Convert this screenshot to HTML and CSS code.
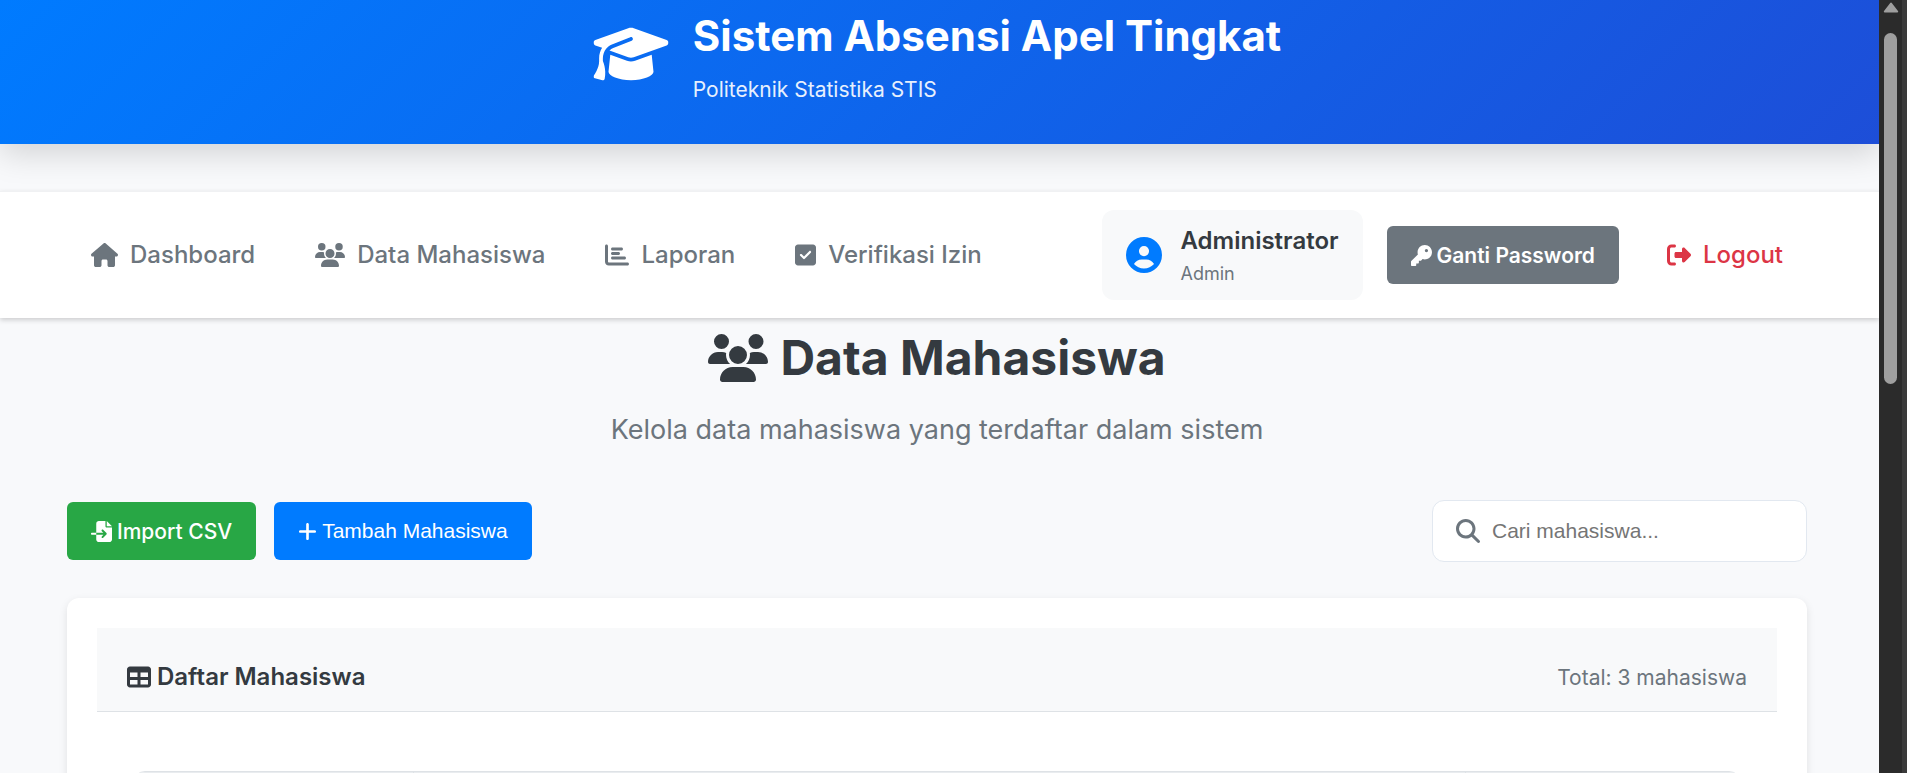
FILE: index.html
```html
<!DOCTYPE html>
<html lang="id">
<head>
<meta charset="utf-8">
<title>Data Mahasiswa</title>
<link rel="stylesheet" href="styles.css">
</head>
<body>
<svg class="sprite" aria-hidden="true">
  <symbol id="cap" viewBox="0 0 640 512"><path d="M320 32c-8.1 0-16.1 1.4-23.7 4.1L15.8 137.4C6.3 140.9 0 149.9 0 160s6.3 19.1 15.8 22.6l57.9 20.9C57.3 229.3 48 259.8 48 291.9v28.1c0 28.4-10.8 57.7-22.3 80.8c-6.5 13-13.9 25.8-22.5 37.6C0 442.7-.9 448.3 .9 453.4s6 8.9 11.2 10.2l64 16c4.2 1.1 8.7 .3 12.4-2s6.3-6.1 7.1-10.4c8.6-42.8 4.3-81.2-2.1-108.7C90.3 344.3 86 329.8 80 316.5V291.9c0-30.2 10.2-58.7 27.9-81.5c12.9-15.5 29.6-28 49.2-35.7l157-61.7c8.2-3.2 17.5 .8 20.7 9s-.8 17.5-9 20.7l-157 61.7c-12.4 4.9-23.3 12.4-32.2 21.6l159.6 57.6c7.6 2.7 15.6 4.1 23.7 4.1s16.1-1.4 23.7-4.1L624.2 182.6c9.5-3.4 15.8-12.5 15.8-22.6s-6.3-19.1-15.8-22.6L343.7 36.1C336.1 33.4 328.1 32 320 32zM128 408c0 35.3 86 72 192 72s192-36.7 192-72L496.7 262.6 354.5 314c-11.1 4-22.8 6-34.5 6s-23.5-2-34.5-6L143.3 262.6 128 408z"/></symbol>
  <symbol id="house" viewBox="0 0 576 512"><path d="M575.8 255.5c0 18-15 32.1-32 32.1h-32l.7 160.2c0 2.7-.2 5.4-.5 8.1V472c0 22.1-17.9 40-40 40H456c-1.1 0-2.2 0-3.3-.1c-1.4 .1-2.8 .1-4.2 .1H416 392c-22.1 0-40-17.9-40-40V448 384c0-17.7-14.3-32-32-32H256c-17.7 0-32 14.3-32 32v64 24c0 22.1-17.9 40-40 40H160 128.1c-1.5 0-3-.1-4.5-.2c-1.2 .1-2.4 .2-3.6 .2H104c-22.1 0-40-17.9-40-40V360c0-.9 0-1.9 .1-2.8V287.6H32c-18 0-32-14-32-32.1c0-9 3-17 10-24L266.4 8c7-7 15-8 22-8s15 2 21 7L564.8 231.5c8 7 12 15 11 24z"/></symbol>
  <symbol id="users" viewBox="0 0 640 512"><path d="M144 0a80 80 0 1 1 0 160A80 80 0 1 1 144 0zM512 0a80 80 0 1 1 0 160A80 80 0 1 1 512 0zM0 298.7C0 239.8 47.8 192 106.7 192h42.7c15.9 0 31 3.5 44.6 9.7c-1.3 7.2-1.9 14.7-1.9 22.3c0 38.2 16.8 72.5 43.3 96c-.2 0-.4 0-.7 0H21.3C9.6 320 0 310.4 0 298.7zM405.3 320c-.2 0-.4 0-.7 0c26.6-23.5 43.3-57.8 43.3-96c0-7.6-.7-15-1.9-22.3c13.6-6.3 28.7-9.7 44.6-9.7h42.7C592.2 192 640 239.8 640 298.7c0 11.8-9.6 21.3-21.3 21.3H405.3zM224 224a96 96 0 1 1 192 0 96 96 0 1 1 -192 0zM128 485.3C128 411.7 187.7 352 261.3 352H378.7C452.3 352 512 411.7 512 485.3c0 14.7-11.9 26.7-26.7 26.7H154.7c-14.7 0-26.7-11.9-26.7-26.7z"/></symbol>
  <symbol id="chart" viewBox="0 0 512 512"><path d="M32 32c17.7 0 32 14.3 32 32V400c0 8.8 7.2 16 16 16H480c17.7 0 32 14.3 32 32s-14.3 32-32 32H80c-44.2 0-80-35.8-80-80V64C0 46.3 14.3 32 32 32zm96 96c0-17.7 14.3-32 32-32l192 0c17.7 0 32 14.3 32 32s-14.3 32-32 32H160c-17.7 0-32-14.3-32-32zm32 64H288c17.7 0 32 14.3 32 32s-14.3 32-32 32H160c-17.7 0-32-14.3-32-32s14.3-32 32-32zm0 96H416c17.7 0 32 14.3 32 32s-14.3 32-32 32H160c-17.7 0-32-14.3-32-32s14.3-32 32-32z"/></symbol>
  <symbol id="check" viewBox="0 0 448 512"><path d="M64 32C28.7 32 0 60.7 0 96V416c0 35.3 28.7 64 64 64H384c35.3 0 64-28.7 64-64V96c0-35.3-28.7-64-64-64H64zM337 209L209 337c-9.4 9.4-24.6 9.4-33.9 0l-64-64c-9.4-9.4-9.4-24.6 0-33.9s24.6-9.4 33.9 0l47 47L303 175c9.4-9.4 24.6-9.4 33.9 0s9.4 24.6 0 33.9z"/></symbol>
  <symbol id="user" viewBox="0 0 512 512"><path d="M399 384.2C376.9 345.8 335.4 320 288 320H224c-47.4 0-88.9 25.8-111 64.2c35.2 39.2 86.2 63.8 143 63.8s107.8-24.7 143-63.8zM0 256a256 256 0 1 1 512 0A256 256 0 1 1 0 256zm256 16a72 72 0 1 0 0-144 72 72 0 1 0 0 144z"/></symbol>
  <symbol id="key" viewBox="0 0 512 512"><path d="M336 352c97.2 0 176-78.8 176-176S433.2 0 336 0S160 78.8 160 176c0 18.7 2.9 36.8 8.3 53.7L7 391c-4.5 4.5-7 10.6-7 17v80c0 13.3 10.7 24 24 24h80c13.3 0 24-10.7 24-24V448h40c13.3 0 24-10.7 24-24V384h40c6.4 0 12.5-2.5 17-7l33.3-33.3c16.9 5.4 35 8.3 53.7 8.3zM376 96a40 40 0 1 1 0 80 40 40 0 1 1 0-80z"/></symbol>
  <symbol id="exit" viewBox="0 0 512 512"><path d="M377.9 105.9L500.7 228.7c7.2 7.2 11.3 17.1 11.3 27.3s-4.1 20.1-11.3 27.3L377.9 406.1c-6.4 6.4-15 9.9-24 9.9c-18.7 0-33.9-15.2-33.9-33.9l0-62.1-128 0c-17.7 0-32-14.3-32-32l0-64c0-17.7 14.3-32 32-32l128 0 0-62.1c0-18.7 15.2-33.9 33.9-33.9c9 0 17.6 3.6 24 9.9zM160 96L96 96c-17.7 0-32 14.3-32 32l0 256c0 17.7 14.3 32 32 32l64 0c17.7 0 32 14.3 32 32s-14.3 32-32 32l-64 0c-53 0-96-43-96-96L0 128C0 75 43 32 96 32l64 0c17.7 0 32 14.3 32 32s-14.3 32-32 32z"/></symbol>
  <symbol id="import" viewBox="0 0 512 512"><path d="M128 64c0-35.3 28.7-64 64-64H352V128c0 17.7 14.3 32 32 32H512V448c0 35.3-28.7 64-64 64H192c-35.3 0-64-28.7-64-64V336H302.1l-39 39c-9.4 9.4-9.4 24.6 0 33.9s24.6 9.4 33.9 0l80-80c9.4-9.4 9.4-24.6 0-33.9l-80-80c-9.4-9.4-24.6-9.4-33.9 0s-9.4 24.6 0 33.9l39 39H128V64zm0 224v48H24c-13.3 0-24-10.7-24-24s10.7-24 24-24H128zM512 128H384V0L512 128z"/></symbol>
  <symbol id="plus" viewBox="0 0 448 512"><path d="M256 80c0-17.7-14.3-32-32-32s-32 14.3-32 32V224H48c-17.7 0-32 14.3-32 32s14.3 32 32 32H192V432c0 17.7 14.3 32 32 32s32-14.3 32-32V288H400c17.7 0 32-14.3 32-32s-14.3-32-32-32H256V80z"/></symbol>
  <symbol id="search" viewBox="0 0 512 512"><path d="M416 208c0 45.9-14.9 88.3-40 122.7L502.6 457.4c12.5 12.5 12.5 32.8 0 45.3s-32.8 12.5-45.3 0L330.7 376c-34.4 25.2-76.8 40-122.7 40C93.1 416 0 322.9 0 208S93.1 0 208 0S416 93.1 416 208zM208 352a144 144 0 1 0 0-288 144 144 0 1 0 0 288z"/></symbol>
  <symbol id="table" viewBox="0 0 512 512"><path d="M64 256V160H224v96H64zm0 64H224v96H64V320zm224 96V320H448v96H288zM448 256H288V160H448v96zM64 32C28.7 32 0 60.7 0 96V416c0 35.3 28.7 64 64 64H448c35.3 0 64-28.7 64-64V96c0-35.3-28.7-64-64-64H64z"/></symbol>
</svg>
<div class="page">
  <header class="banner">
    <svg class="banner-logo" viewBox="0 0 640 512" aria-hidden="true"><use href="#cap"/></svg>
    <div>
      <p class="banner-title">Sistem Absensi Apel Tingkat</p>
      <p class="banner-subtitle">Politeknik Statistika STIS</p>
    </div>
  </header>
  <nav class="navbar">
    <div class="nav-links">
      <a class="nav-link" href="#"><svg class="icon icon-house" aria-hidden="true"><use href="#house"/></svg>Dashboard</a>
      <a class="nav-link" href="#"><svg class="icon icon-wide" aria-hidden="true"><use href="#users"/></svg>Data Mahasiswa</a>
      <a class="nav-link" href="#"><svg class="icon" aria-hidden="true"><use href="#chart"/></svg>Laporan</a>
      <a class="nav-link" href="#"><svg class="icon icon-narrow" aria-hidden="true"><use href="#check"/></svg>Verifikasi Izin</a>
    </div>
    <div class="nav-user">
      <div class="profile">
        <svg class="avatar" aria-hidden="true"><use href="#user"/></svg>
        <div>
          <p class="profile-name">Administrator</p>
          <p class="profile-role">Admin</p>
        </div>
      </div>
      <button class="btn btn-secondary" type="button"><svg class="btn-icon" aria-hidden="true"><use href="#key"/></svg>Ganti Password</button>
      <a class="nav-link nav-logout" href="#"><svg class="icon" aria-hidden="true"><use href="#exit"/></svg>Logout</a>
    </div>
  </nav>
  <main class="content">
    <div class="heading">
      <h1 class="heading-title"><svg class="heading-icon" aria-hidden="true"><use href="#users"/></svg>Data Mahasiswa</h1>
      <p class="heading-text">Kelola data mahasiswa yang terdaftar dalam sistem</p>
    </div>
    <div class="toolbar">
      <div class="actions">
        <button class="btn btn-success" type="button"><svg class="btn-icon" aria-hidden="true"><use href="#import"/></svg>Import CSV</button>
        <button class="btn btn-primary" type="button"><svg class="btn-icon btn-icon-narrow" aria-hidden="true"><use href="#plus"/></svg>Tambah Mahasiswa</button>
      </div>
      <label class="search">
        <svg class="icon" aria-hidden="true"><use href="#search"/></svg>
        <input class="search-input" type="text" aria-label="Cari mahasiswa" placeholder="Cari mahasiswa...">
      </label>
    </div>
    <section class="card">
      <div class="card-header">
        <h2 class="card-title"><svg class="icon" aria-hidden="true"><use href="#table"/></svg>Daftar Mahasiswa</h2>
        <span class="card-total">Total: 3 mahasiswa</span>
      </div>
      <div class="table-wrap">
        <table class="students">
          <colgroup><col class="col-first"><col><col class="col-last"></colgroup>
          <thead><tr><th></th><th></th><th></th></tr></thead>
        </table>
      </div>
    </section>
  </main>
</div>
<div class="scrollbar" aria-hidden="true">
  <svg class="scroll-arrow" viewBox="0 0 16 11"><path d="M8 1.5 14.2 9.500H1.800z"/></svg>
  <div class="scroll-thumb"></div>
</div>
</body>
</html>
```
FILE: styles.css
```css
* {
  box-sizing: border-box;
}

body {
  margin: 0;
  display: flex;
  height: 100vh;
  overflow: hidden;
  background: #f8f9fa;
  color: #343a40;
  font-family: Inter, "Liberation Sans", sans-serif;
  font-size: 24px;
}

p,
h1,
h2 {
  margin: 0;
}

svg {
  fill: currentColor;
  flex: none;
}

.sprite {
  display: none;
}

.page {
  flex: 1;
  min-width: 0;
  height: 100%;
  overflow: hidden;
  background: #f8f9fb;
}

/* Banner */
.banner {
  display: flex;
  justify-content: center;
  align-items: flex-start;
  gap: 24px;
  padding: 8px 5px 36px 0;
  background: linear-gradient(135deg, #007bff 0%, #1d4ed8 100%);
  box-shadow: 0 10px 30px rgba(0, 0, 0, 0.15);
  color: #fff;
}

.banner-logo {
  width: 76px;
  height: 60px;
  margin-top: 16px;
}

.banner-title {
  margin-bottom: 8px;
  font-size: 42px;
  font-weight: 700;
  line-height: 56px;
}

.banner-subtitle {
  font-size: 21px;
  line-height: 36px;
  opacity: 0.9;
}

/* Navigation */
.navbar {
  display: flex;
  justify-content: space-between;
  align-items: center;
  margin-top: 47px;
  padding: 18px 72px 18px 67px;
  border-top: 1px solid #f0f1f3;
  background: #fff;
  box-shadow: 0 2px 5px rgba(0, 0, 0, 0.18);
}

.nav-links,
.nav-user {
  display: flex;
  align-items: center;
}

.nav-links {
  gap: 12px;
}

.nav-user {
  gap: 24px;
}

.nav-link {
  display: flex;
  align-items: center;
  gap: 12px;
  padding: 0 24px;
  color: #6c757d;
  font-weight: 500;
  line-height: 36px;
  text-decoration: none;
}

.nav-logout {
  color: #dc3545;
}

.icon {
  width: 24px;
  height: 24px;
}

.icon-house {
  width: 27px;
}

.icon-wide {
  width: 30px;
}

.icon-narrow {
  width: 21px;
}

.profile {
  display: flex;
  align-items: center;
  gap: 18px;
  padding: 12px 24px;
  border-radius: 12px;
  background: #f8f9fa;
}

.avatar {
  width: 36px;
  height: 36px;
  color: #007bff;
}

.profile-name {
  font-weight: 600;
  line-height: 38px;
}

.profile-role {
  color: #6c757d;
  font-size: 18px;
  line-height: 28px;
}

/* Buttons */
.btn {
  display: flex;
  align-items: center;
  gap: 5px;
  height: 58px;
  padding: 0 24px;
  border: 0;
  border-radius: 6px;
  color: #fff;
  font-family: inherit;
  font-size: 21px;
  font-weight: 500;
}

.btn-icon {
  width: 21px;
  height: 21px;
}

.btn-icon-narrow {
  width: 19px;
}

.btn-secondary {
  background: #6c757d;
  font-weight: 600;
}

.btn-success {
  background: #28a745;
}

.btn-primary {
  background: #007bff;
  font-family: "Liberation Sans", Arial, sans-serif;
  font-weight: 400;
}

/* Page content */
.content {
  padding: 0 72px 0 67px;
}

.heading {
  padding: 4px 0 47px;
  text-align: center;
}

.heading-title {
  display: flex;
  justify-content: center;
  align-items: center;
  gap: 12px;
  margin-bottom: 13px;
  font-size: 48px;
  font-weight: 700;
  line-height: 72px;
}

.heading-icon {
  width: 60px;
  height: 48px;
}

.heading-text {
  color: #6c757d;
  font-size: 27px;
  line-height: 46px;
}

.toolbar {
  display: flex;
  justify-content: space-between;
  align-items: center;
  margin-bottom: 36px;
}

.actions {
  display: flex;
  gap: 18px;
}

.search {
  display: flex;
  align-items: center;
  gap: 12px;
  width: 375px;
  height: 62px;
  padding: 0 23px;
  border: 1px solid #e2e8f0;
  border-radius: 12px;
  background: #fff;
  color: #6c757d;
}

.search-input {
  flex: 1;
  min-width: 0;
  padding: 0;
  border: 0;
  outline: 0;
  background: none;
  font-family: "Liberation Sans", Arial, sans-serif;
  font-size: 21px;
}

.search-input::placeholder {
  color: #757575;
}

/* Card */
.card {
  padding: 30px;
  border-radius: 12px;
  background: #fff;
  box-shadow: 0 3px 9px rgba(0, 0, 0, 0.1);
}

.card-header {
  display: flex;
  justify-content: space-between;
  align-items: center;
  padding: 31px 30px 16px;
  border-bottom: 1px solid #dee2e6;
  background: #f8f9fa;
}

.card-title {
  display: flex;
  align-items: center;
  gap: 6px;
  font-size: 24px;
  font-weight: 600;
  line-height: 36px;
}

.card-total {
  color: #6c757d;
  font-size: 21px;
}

.table-wrap {
  margin: 59px 36px 0;
  border: 1px solid #dee2e6;
  border-radius: 12px;
  overflow: hidden;
}

.students {
  width: 100%;
  table-layout: fixed;
  border-collapse: collapse;
}

.students th {
  height: 60px;
  border-right: 1px solid #dee2e6;
  background: #e9ecef;
}

.col-first {
  width: 279px;
}

.col-last {
  width: 274px;
}

/* Scrollbar */
.scrollbar {
  display: flex;
  flex: none;
  flex-direction: column;
  align-items: center;
  gap: 20px;
  width: 28px;
  padding-top: 2px;
  border-right: 5px solid #3a3a3a;
  background: #2b2b2b;
  color: #9f9f9f;
}

.scroll-arrow {
  width: 16px;
  height: 11px;
  stroke: currentColor;
  stroke-width: 2;
  stroke-linejoin: round;
}

.scroll-thumb {
  width: 13px;
  height: 351px;
  border-radius: 7px;
  background: #9f9f9f;
}
```
